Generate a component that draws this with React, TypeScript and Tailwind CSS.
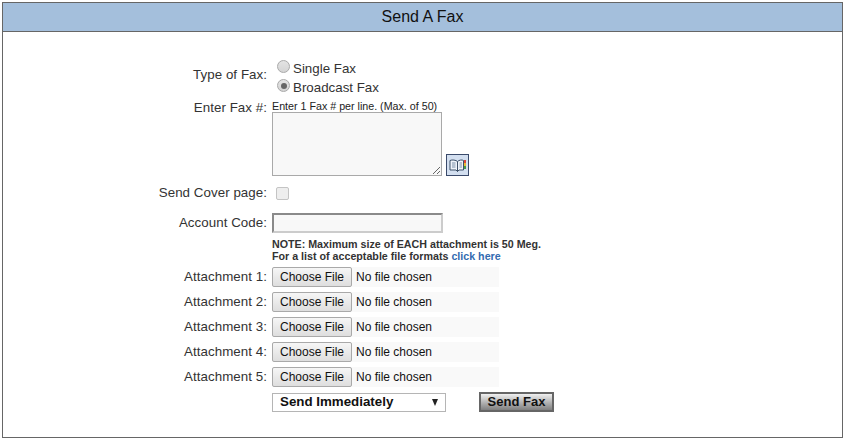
import React from 'react';

const labelClass = "w-[265px] shrink-0 text-right text-[13.33px] leading-[16px] tracking-[0.05px] text-[#333]";

const Radio = ({ checked }: { checked?: boolean }) => (
  <span className="flex h-[13px] w-[13px] shrink-0 -translate-y-[2px] items-center justify-center rounded-full border border-[#a9a9a9] bg-gradient-to-b from-[#e4e4e4] to-[#d4d4d4]">
    {checked && <span className="h-[6px] w-[6px] rounded-full bg-[#666]" />}
  </span>
);

const BookIcon = () => (
  <svg width="17" height="15" viewBox="0 0 17 15">
    <path d="M1 2.5 L1 12 L7 12 L8.5 13.5 L8.5 3.5 C7 2 3 1.5 1 2.5 Z" fill="#eef2f8" stroke="#3d5068" strokeWidth="1" />
    <path d="M14.5 2.5 L14.5 12 L10 12 L8.5 13.5 L8.5 3.5 C10 2 13 1.5 14.5 2.5 Z" fill="#eef2f8" stroke="#3d5068" strokeWidth="1" />
    <path d="M3 5 H6.5 M3 7 H6.5 M3 9 H6.5 M10.5 5 H13 M10.5 7 H13 M10.5 9 H13" stroke="#7d90a8" strokeWidth="1" />
    <rect x="15" y="2" width="2" height="3" fill="#d9483b" />
    <rect x="15" y="5" width="2" height="3" fill="#e8b931" />
    <rect x="15" y="8" width="2" height="3" fill="#4a9a48" />
  </svg>
);

const AttachmentRow = ({ n }: { n: number }) => (
  <div className="mb-[5px] flex h-[20px] items-center">
    <div className={labelClass}>Attachment {n}:</div>
    <div className="ml-[5px] flex h-[20px] w-[227px] items-center bg-[#f9f9f9]">
      <button className="h-[20px] w-[80px] rounded-[2px] border border-[#a9a9a9] bg-gradient-to-b from-[#f6f6f6] to-[#dedede] text-center text-[12px] leading-[18px] text-[#111]">
        Choose File
      </button>
      <span className="ml-[4px] text-[12px] leading-[18px] text-[#111]">No file chosen</span>
    </div>
  </div>
);

export default function App() {
  return (
    <div className="h-[441px] w-[845px] bg-white pl-[2px] pt-[2px] font-['Liberation_Sans',Arial,sans-serif]">
      <div className="h-[436px] w-[841px] border border-[#666]">
        <div className="flex h-[29px] items-center justify-center border-b border-[#666] bg-[#a4bfdc] text-[16px] text-[#111]">
          Send A Fax
        </div>

        <div className="-ml-[1px] pt-[27px]">
          {/* type of fax */}
          <div className="flex h-[38px]">
            <div className={`${labelClass} pt-[8px]`}>Type of Fax:</div>
            <div className="ml-[10px] flex flex-col">
              <label className="flex h-[19px] items-center gap-[3px] text-[13.33px] text-[#333]">
                <Radio />
                <span>Single Fax</span>
              </label>
              <label className="flex h-[19px] items-center gap-[3px] text-[13.33px] text-[#333]">
                <Radio checked />
                <span>Broadcast Fax</span>
              </label>
            </div>
          </div>

          {/* fax numbers */}
          <div className="mt-[3px] flex">
            <div className={labelClass}>Enter Fax #:</div>
            <div className="ml-[5px]">
              <div className="text-[10.7px] leading-[12px] text-[#222]">Enter 1 Fax # per line. (Max. of 50)</div>
              <div className="flex items-end gap-[4px]">
                <div className="relative h-[64px] w-[170px] border border-[#a9a9a9] bg-[#f8f8f8]">
                  <svg className="absolute bottom-0 right-0" width="10" height="10" viewBox="0 0 10 10">
                    <path d="M9 2 L2 9 M9 6 L6 9" stroke="#666" strokeWidth="1" />
                  </svg>
                </div>
                <div className="flex h-[22px] w-[23px] items-center justify-center border border-[#3a4a6b] bg-[#d3dff0]">
                  <BookIcon />
                </div>
              </div>
            </div>
          </div>

          {/* cover page */}
          <div className="mt-[9px] flex h-[16px] items-center">
            <div className={labelClass}>Send Cover page:</div>
            <div className="ml-[9px] h-[13px] w-[13px] rounded-[2px] border border-[#c4c4c4] bg-[#eeeeee]" />
          </div>

          {/* account code */}
          <div className="mt-[12px] flex h-[20px] items-center">
            <div className={labelClass}>Account Code:</div>
            <div className="ml-[5px] h-[20px] w-[171px] border-2 border-b-[#ccc] border-l-[#8a8a8a] border-r-[#ccc] border-t-[#8a8a8a] bg-[#f8f8f8]" />
          </div>

          {/* note */}
          <div className="ml-[270px] mt-[5px] text-[10.7px] font-bold leading-[12px] text-[#333]">
            <div>NOTE: Maximum size of EACH attachment is 50 Meg.</div>
            <div>
              For a list of acceptable file formats <a className="text-[#336bb0]">click here</a>
            </div>
          </div>

          <div className="mt-[5px]">
            {[1, 2, 3, 4, 5].map((n) => (
              <AttachmentRow key={n} n={n} />
            ))}
          </div>

          {/* send options */}
          <div className="ml-[270px] flex items-center">
            <div className="flex h-[19px] w-[174px] items-center justify-between border border-[#b5b5b5] bg-white pl-[7px] pr-[7px] text-[13.33px] font-bold text-[#111]">
              <span>Send Immediately</span>
              <span className="h-0 w-0 border-l-[3px] border-r-[3px] border-t-[7px] border-l-transparent border-r-transparent border-t-[#222]" />
            </div>
            <button className="ml-[33px] h-[20px] w-[75px] border-2 border-[#666] bg-gradient-to-b from-[#f0f0f0] to-[#808080] text-center text-[13px] font-bold leading-[16px] text-[#111]">
              Send Fax
            </button>
          </div>
        </div>
      </div>
    </div>
  );
}
